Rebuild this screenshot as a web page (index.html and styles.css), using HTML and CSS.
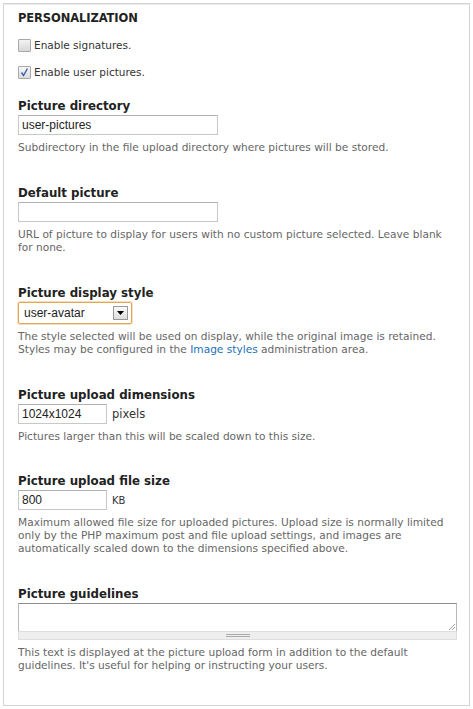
FILE: index.html
```html
<!DOCTYPE html>
<html>
<head>
<meta charset="utf-8">
<link rel="stylesheet" href="styles.css">
</head>
<body>
<div class="fieldset">
  <div class="legend">PERSONALIZATION</div>
  <div class="check-row">
    <span class="checkbox"></span>
    <span class="check-label">Enable signatures.</span>
  </div>
  <div class="check-row">
    <span class="checkbox checked"><svg width="11" height="11" viewBox="0 0 11 11"><path d="M2.5 5.5 L4.5 8.5 L8.5 1.5" fill="none" stroke="#3b5fa8" stroke-width="1.4"/></svg></span>
    <span class="check-label">Enable user pictures.</span>
  </div>

  <div class="item item-first">
    <div class="label">Picture directory</div>
    <div class="input wide">user-pictures</div>
    <div class="desc">Subdirectory in the file upload directory where pictures will be stored.</div>
  </div>

  <div class="item">
    <div class="label">Default picture</div>
    <div class="input wide"></div>
    <div class="desc">URL of picture to display for users with no custom picture selected. Leave blank for none.</div>
  </div>

  <div class="item">
    <div class="label">Picture display style</div>
    <div class="select">
      <span class="select-value">user-avatar</span>
      <span class="select-btn"><svg width="7" height="4" viewBox="0 0 7 4"><path d="M0 0 H7 L3.5 4 Z" fill="#000"/></svg></span>
    </div>
    <div class="desc desc-gap">The style selected will be used on display, while the original image is retained. Styles may be configured in the <a class="link">Image styles</a> administration area.</div>
  </div>

  <div class="item">
    <div class="label">Picture upload dimensions</div>
    <div class="inline-row">
      <div class="input short">1024x1024</div>
      <span class="suffix">pixels</span>
    </div>
    <div class="desc desc-gap">Pictures larger than this will be scaled down to this size.</div>
  </div>

  <div class="item item-tight">
    <div class="label">Picture upload file size</div>
    <div class="inline-row">
      <div class="input short">800</div>
      <span class="suffix suffix-small">KB</span>
    </div>
    <div class="desc desc-gap">Maximum allowed file size for uploaded pictures. Upload size is normally limited only by the PHP maximum post and file upload settings, and images are automatically scaled down to the dimensions specified above.</div>
  </div>

  <div class="item">
    <div class="label">Picture guidelines</div>
    <div class="textarea-wrap">
      <div class="textarea">
        <svg class="resize" width="7" height="7" viewBox="0 0 7 7"><path d="M1 7 L7 1 M4 7 L7 4" stroke="#888" stroke-width="0.8"/></svg>
      </div>
      <div class="grippie"><span class="grip"></span></div>
    </div>
    <div class="desc desc-gap">This text is displayed at the picture upload form in addition to the default guidelines. It's useful for helping or instructing your users.</div>
  </div>
</div>
</body>
</html>
```

FILE: styles.css
```css
html, body {
  margin: 0;
  padding: 0;
  background: #fff;
}

body {
  font-family: "DejaVu Sans", Verdana, sans-serif;
  color: #333;
  width: 473px;
  height: 709px;
  overflow: hidden;
}

.fieldset {
  margin: 3px 3px 0 3px;
  height: 703px;
  box-sizing: border-box;
  border: 1px solid #d4d4d4;
  box-shadow: inset 0 1px 0 #ececec;
  padding: 7px 16px 0 14px;
}

.legend {
  font-size: 11.5px;
  font-weight: bold;
  color: #222;
  line-height: 14px;
  letter-spacing: -0.1px;
}

.check-row {
  display: flex;
  align-items: center;
  gap: 3px;
  height: 14px;
  margin-top: 13px;
  font-size: 10.5px;
  color: #333;
}

.checkbox {
  width: 11px;
  height: 11px;
  border: 1px solid #a8a8a8;
  border-radius: 1px;
  background: linear-gradient(#f2f2f2, #d8d8d8);
  display: flex;
  align-items: center;
  justify-content: center;
}

.checkbox.checked {
  background: linear-gradient(#f6f6f6, #dcdcdc);
}

.item {
  margin-top: 31px;
}

.item-first {
  margin-top: 19px;
}

.item-tight {
  margin-top: 30px;
}

.label {
  font-size: 11.8px;
  font-weight: bold;
  color: #222;
  line-height: 16px;
  margin-bottom: 1px;
}

.input {
  box-sizing: border-box;
  height: 20px;
  border: 1px solid #c8c8c8;
  border-top-color: #b0b0b0;
  background: #fff;
  font-family: "Liberation Sans", Arial, sans-serif;
  font-size: 12px;
  color: #222;
  padding: 2px 3px;
  line-height: 14px;
}

.wide {
  width: 200px;
}

.short {
  width: 89px;
}

.inline-row {
  display: flex;
  align-items: center;
  gap: 5px;
}

.suffix {
  font-size: 11.5px;
  color: #333;
}

.suffix-small {
  font-size: 10px;
}

.select {
  box-sizing: border-box;
  width: 114px;
  height: 22px;
  border: 1px solid #e2a85a;
  border-radius: 2px;
  box-shadow: 0 0 0 1px #f6dfb8;
  display: flex;
  align-items: center;
  justify-content: space-between;
  padding: 0 3px 0 5px;
  font-family: "Liberation Sans", Arial, sans-serif;
  font-size: 12px;
  color: #222;
}

.select-btn {
  box-sizing: border-box;
  width: 15px;
  height: 14px;
  border: 1px solid #999;
  background: linear-gradient(#fafafa, #dcdcdc);
  display: flex;
  align-items: center;
  justify-content: center;
}

.desc {
  font-size: 10.6px;
  line-height: 13px;
  color: #666;
  margin-top: 6px;
}

.desc-gap {
  margin-top: 6px;
}

.link {
  color: #1d71b8;
  text-decoration: none;
}

.textarea-wrap {
  width: 439px;
}

.textarea {
  position: relative;
  box-sizing: border-box;
  height: 28px;
  border: 1px solid #b8b8b8;
  border-top-color: #8c8c8c;
  border-bottom: none;
  background: #fff;
}

.resize {
  position: absolute;
  right: 1px;
  bottom: 1px;
}

.grippie {
  box-sizing: border-box;
  height: 9px;
  border: 1px solid #ddd;
  background: #eee;
  display: flex;
  align-items: center;
  justify-content: center;
}

.grip {
  width: 24px;
  height: 3px;
  border-top: 1px solid #aaa;
  border-bottom: 1px solid #aaa;
  box-sizing: border-box;
}
```
